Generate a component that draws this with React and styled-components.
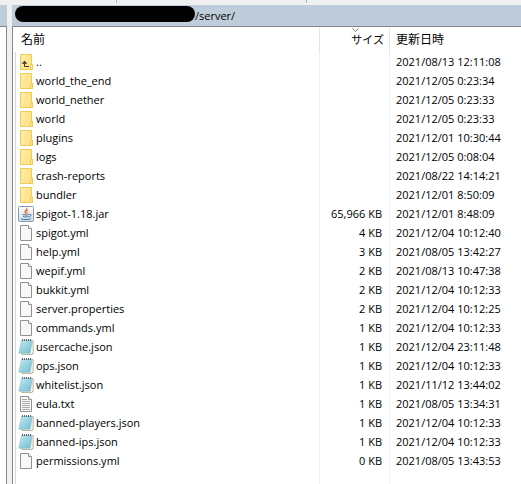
import styled, { createGlobalStyle } from 'styled-components';

const GlobalStyle = createGlobalStyle`
	* {
		box-sizing: border-box;
	}

	body {
		margin: 0;
		background: #f0f0f0;
		color: #000;
		font-family: 'Open Sans', 'Noto Sans CJK JP', sans-serif;
		font-size: 11px;
	}
`;

const FILES = [
	{ name: '..', type: 'up', date: '2021/08/13 12:11:08' },
	{ name: 'world_the_end', type: 'folder', date: '2021/12/05 0:23:34' },
	{ name: 'world_nether', type: 'folder', date: '2021/12/05 0:23:33' },
	{ name: 'world', type: 'folder', date: '2021/12/05 0:23:33' },
	{ name: 'plugins', type: 'folder', date: '2021/12/01 10:30:44' },
	{ name: 'logs', type: 'folder', date: '2021/12/05 0:08:04' },
	{ name: 'crash-reports', type: 'folder', date: '2021/08/22 14:14:21' },
	{ name: 'bundler', type: 'folder', date: '2021/12/01 8:50:09' },
	{ name: 'spigot-1.18.jar', type: 'java', size: '65,966 KB', date: '2021/12/01 8:48:09' },
	{ name: 'spigot.yml', type: 'file', size: '4 KB', date: '2021/12/04 10:12:40' },
	{ name: 'help.yml', type: 'file', size: '3 KB', date: '2021/08/05 13:42:27' },
	{ name: 'wepif.yml', type: 'file', size: '2 KB', date: '2021/08/13 10:47:38' },
	{ name: 'bukkit.yml', type: 'file', size: '2 KB', date: '2021/12/04 10:12:33' },
	{ name: 'server.properties', type: 'file', size: '2 KB', date: '2021/12/04 10:12:25' },
	{ name: 'commands.yml', type: 'file', size: '1 KB', date: '2021/12/04 10:12:33' },
	{ name: 'usercache.json', type: 'notepad', size: '1 KB', date: '2021/12/04 23:11:48' },
	{ name: 'ops.json', type: 'notepad', size: '1 KB', date: '2021/12/04 10:12:33' },
	{ name: 'whitelist.json', type: 'notepad', size: '1 KB', date: '2021/11/12 13:44:02' },
	{ name: 'eula.txt', type: 'text', size: '1 KB', date: '2021/08/05 13:34:31' },
	{ name: 'banned-players.json', type: 'notepad', size: '1 KB', date: '2021/12/04 10:12:33' },
	{ name: 'banned-ips.json', type: 'notepad', size: '1 KB', date: '2021/12/04 10:12:33' },
	{ name: 'permissions.yml', type: 'file', size: '0 KB', date: '2021/08/05 13:43:53' },
];

const Window = styled.div`
	display: flex;
	flex-direction: column;
	min-height: 100vh;
`;

const ToolStrip = styled.div`
	display: flex;
	height: 5px;
	padding-left: 116px;
	gap: 189px;
`;

const StripDivider = styled.div`
	width: 1px;
	height: 3px;
	background: #a9b9c9;
`;

const Panes = styled.div`
	display: flex;
	flex: 1;
	gap: 5px;
`;

const LocalPane = styled.div`
	display: flex;
	flex-direction: column;
	flex: 0 0 7px;
`;

const RemotePane = styled.main`
	display: flex;
	flex-direction: column;
	flex: 1;
	min-width: 0;
`;

const PathBar = styled.div`
	display: flex;
	align-items: flex-start;
	height: 21px;
	padding: 1px 3px;
	background: #bfcddb;
`;

const HiddenPath = styled.div`
	width: 180px;
	height: 16px;
	border-radius: 8px;
	background: #000;
`;

const PathText = styled.span`
	line-height: 20px;
`;

const PaneBody = styled.div`
	display: flex;
	flex-direction: column;
	flex: 1;
	border: solid #828790;
	border-width: ${({ $side }) => ($side === 'left' ? '1px 1px 0 0' : '1px 0 0 1px')};
	padding-left: ${({ $side }) => ($side === 'left' ? '0' : '2px')};
	background: #fff;
`;

const FileTable = styled.table`
	flex: 1;
	width: 100%;
	table-layout: fixed;
	border-spacing: 0;
`;

const NameCol = styled.col`
	width: auto;
`;

const SizeCol = styled.col`
	width: 70px;
`;

const DateCol = styled.col`
	width: 131px;
`;

const HeaderCell = styled.th`
	position: relative;
	height: 25px;
	padding: 1px 0 0;
	border-right: ${({ $last }) => ($last ? 'none' : '1px solid #e5e5e5')};
	font-weight: 400;
`;

const HeaderButton = styled.button`
	display: block;
	width: 100%;
	height: 24px;
	padding: 0 5px 0 6px;
	border: none;
	background: none;
	color: inherit;
	font-family: inherit;
	font-size: ${({ $kana }) => ($kana ? '11px' : '12px')};
	line-height: 24px;
	text-align: ${({ $align }) => $align || 'left'};
`;

const SortArrow = styled.svg`
	position: absolute;
	top: 1px;
	left: calc(50% - 3px);
	width: 7px;
	height: 5px;
`;

const Cell = styled.td`
	height: 19px;
	padding: 0 7px 0 6px;
	border-right: 1px solid #e9f2fa;
	line-height: 19px;
	text-align: ${({ $align }) => $align || 'left'};
	white-space: nowrap;

	&:last-child {
		border-right: none;
	}
`;

const NameCell = styled(Cell)`
	padding: 0 2px;
	border-left: 1px solid #c3dbf3;
`;

const FileName = styled.div`
	display: flex;
	align-items: center;
	gap: 2px;
`;

const FillerRow = styled.tr`
	height: 100%;
`;

const Icon = styled.svg`
	flex: none;
	width: 16px;
	height: 16px;
`;

const FolderIcon = ({ up }) => (
	<Icon viewBox="0 0 16 16">
		<path d="M2.5.5h11v9.5h1v5.5h-12z" fill="#ffe58f" stroke="#efcb50" />
		<path d="M3 1h5L4 15H3z" fill="#ffeba8" />
		<path d="M12.5 15.5v-5h2v5z" fill="#ffe799" stroke="#efcb50" />
		{up && (
			<>
				<path d="M6.5 8v4.5H11" fill="none" stroke="#3b3b3b" />
				<path d="M3.5 9.8L6.5 6.8l3 3z" fill="#3b3b3b" />
			</>
		)}
	</Icon>
);

const SheetIcon = ({ lines }) => (
	<Icon viewBox="0 0 16 16">
		<path d="M2.5.5h8l3 3v12h-11z" fill="#f8f8f8" stroke="#929292" />
		<path d="M10.5.5v3h3" fill="#fff" stroke="#929292" />
		{lines && <path d="M4 3.5h5M4 5.5h8M4 7.5h8M4 9.5h8M4 11.5h8M4 13.5h8" stroke="#aaa" />}
	</Icon>
);

const NotepadIcon = () => (
	<Icon viewBox="0 0 16 16">
		<defs>
			<linearGradient id="notepad" x1="0" y1="0" x2="1" y2="1">
				<stop offset="0" stopColor="#c9edf3" />
				<stop offset="1" stopColor="#68b7cd" />
			</linearGradient>
		</defs>
		<path d="M5 1.5h10.5v13L14 15.7H3.5z" fill="#a99d7d" />
		<path d="M13.5 2h1.3v12l-1.3 1H4z" fill="#f4f1e5" />
		<path d="M3.5 1.5h10.8L12 14.2H.8z" fill="url(#notepad)" stroke="#7bb5c3" strokeWidth=".5" />
		<path d="M3.4 5h9.8M3 7.5h9.8M2.4 10h9.8M2 12.5h9.8" stroke="#9bd7e3" strokeWidth=".5" />
		<path d="M4.5 0v2M6.5 0v2M8.5 0v2M10.5 0v2M12.5 0v2" stroke="#5b6b70" />
	</Icon>
);

const JavaIcon = () => (
	<Icon viewBox="0 0 16 16">
		<defs>
			<linearGradient id="java" x1="0" y1="0" x2="0" y2="1">
				<stop offset="0" stopColor="#fff" />
				<stop offset="1" stopColor="#cddbe6" />
			</linearGradient>
		</defs>
		<rect x=".5" y=".5" width="15" height="15" rx="1" fill="url(#java)" stroke="#8799aa" />
		<path d="M8.8 1.5C9.8 3.8 5 4.4 7.6 7.8M10.4 3.7C7.8 4.8 8 5.6 9 6.4 9.5 7 9 7.6 8.6 8" fill="none" stroke="#ed7133" strokeWidth="1.1" />
		<path d="M4.5 8.5c1.5.7 4.9.6 6.5 0M5 10.5c1.4.6 4 .6 5.4 0M3 12.8c2.4 1.2 8.2 1 9.8-.2M11.3 8.4c2.6-.6 2.1 2-.3 2.5" fill="none" stroke="#426f9b" />
	</Icon>
);

const FileIcon = ({ type }) => {
	switch (type) {
		case 'up':
			return <FolderIcon up />;
		case 'folder':
			return <FolderIcon />;
		case 'java':
			return <JavaIcon />;
		case 'notepad':
			return <NotepadIcon />;
		case 'text':
			return <SheetIcon lines />;
		default:
			return <SheetIcon />;
	}
};

const FileRow = ({ name, type, size, date }) => (
	<tr>
		<NameCell>
			<FileName>
				<FileIcon type={type} />
				<span>{name}</span>
			</FileName>
		</NameCell>
		<Cell $align="right">{size}</Cell>
		<Cell>{date}</Cell>
	</tr>
);

const FileList = () => (
	<FileTable>
		<colgroup>
			<NameCol />
			<SizeCol />
			<DateCol />
		</colgroup>
		<thead>
			<tr>
				<HeaderCell>
					<HeaderButton>名前</HeaderButton>
				</HeaderCell>
				<HeaderCell>
					<SortArrow viewBox="0 0 7 5">
						<path d="M.5.5l3 3 3-3" fill="none" stroke="#777" />
					</SortArrow>
					<HeaderButton $align="right" $kana>サイズ</HeaderButton>
				</HeaderCell>
				<HeaderCell $last>
					<HeaderButton>更新日時</HeaderButton>
				</HeaderCell>
			</tr>
		</thead>
		<tbody>
			{FILES.map((file) => (
				<FileRow key={file.name} {...file} />
			))}
			<FillerRow>
				<NameCell />
				<Cell />
				<Cell />
			</FillerRow>
		</tbody>
	</FileTable>
);

const App = () => (
	<>
		<GlobalStyle />
		<Window>
			<ToolStrip>
				<StripDivider />
				<StripDivider />
			</ToolStrip>
			<Panes>
				<LocalPane>
					<PathBar />
					<PaneBody $side="left" />
				</LocalPane>
				<RemotePane>
					<PathBar>
						<HiddenPath />
						<PathText>/server/</PathText>
					</PathBar>
					<PaneBody $side="right">
						<FileList />
					</PaneBody>
				</RemotePane>
			</Panes>
		</Window>
	</>
);

export default App;
